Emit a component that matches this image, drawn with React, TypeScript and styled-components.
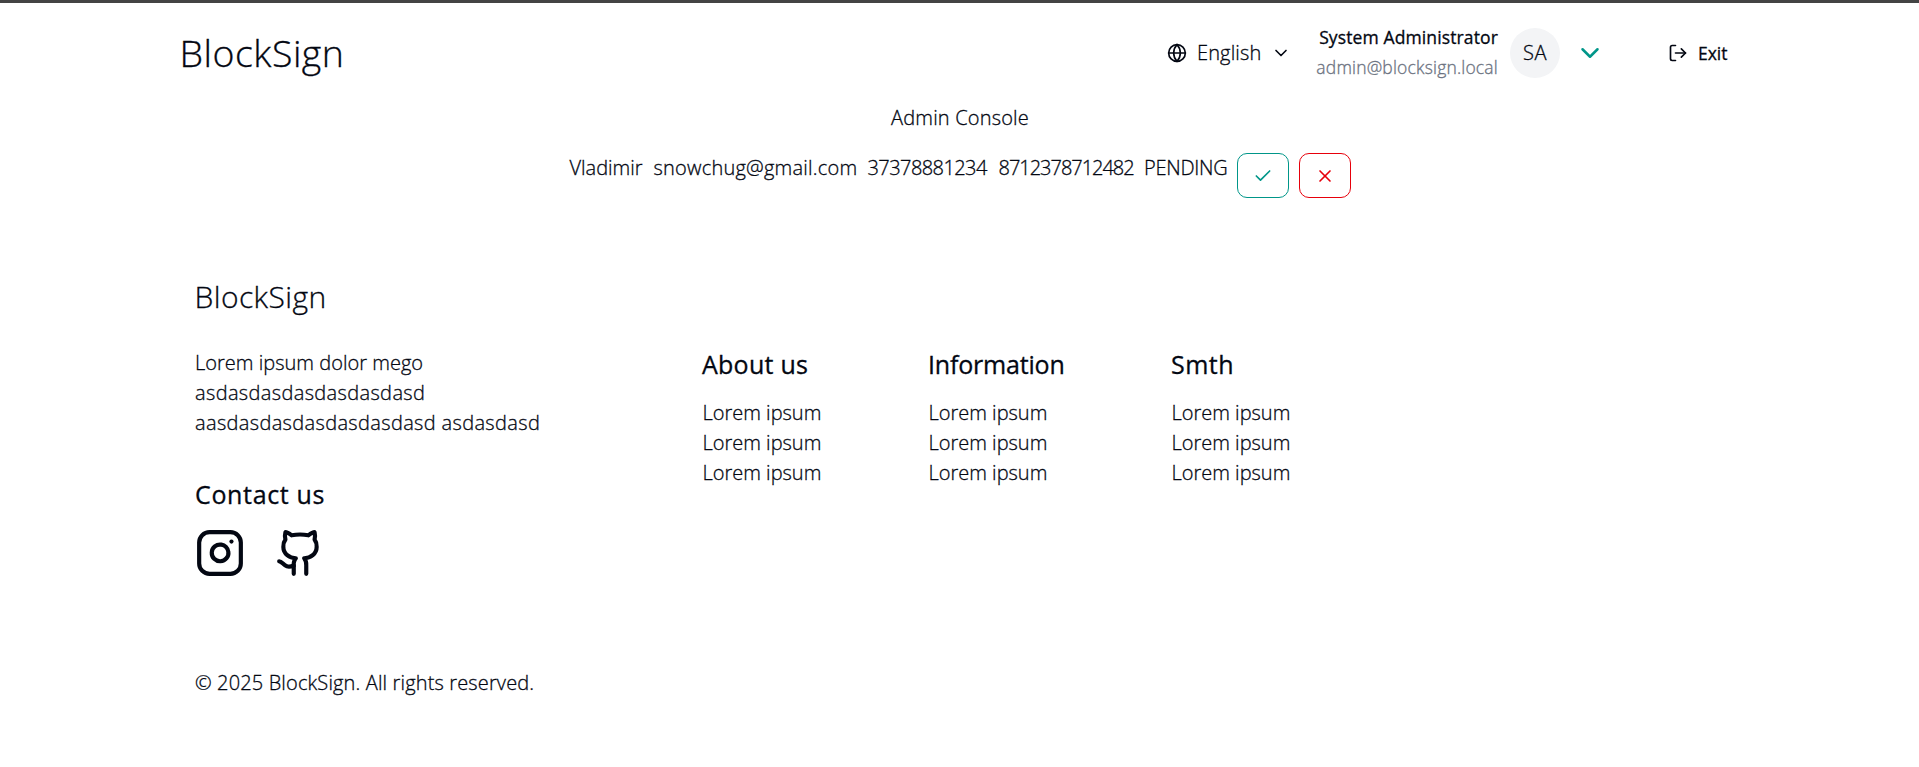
import React from "react";
import styled, { createGlobalStyle } from "styled-components";
import { Check, ChevronDown, Github, Globe, Instagram, LogOut, X } from "lucide-react";

const ink = "#030712";
const teal = "#009689";
const red = "#e7000b";

const GlobalStyle = createGlobalStyle`
  *, *::before, *::after { box-sizing: border-box; }
  body { margin: 0; background: #fff; }
  svg { display: block; flex: none; }
`;

const Page = styled.div`
  min-height: 767px;
  border-top: 3px solid #444;
  color: ${ink};
  font: 300 20px/30px "Open Sans", "Noto Sans", sans-serif;
  -webkit-text-stroke-width: 0.3px;
  white-space: nowrap;
`;

const Header = styled.header`
  width: 1560px;
  height: 100px;
  margin: 0 auto;
  display: flex;
  align-items: center;
  justify-content: space-between;
`;

const Logo = styled.div<{ $large?: boolean }>`
  font-size: ${(p) => (p.$large ? "37.5px" : "30px")};
  line-height: ${(p) => (p.$large ? "45px" : "40px")};
  letter-spacing: ${(p) => (p.$large ? "0.5px" : "0.4px")};
  padding-bottom: ${(p) => (p.$large ? "2px" : "0")};
`;

const HeaderActions = styled.div`
  display: flex;
  align-items: center;
`;

const LanguageButton = styled.button`
  display: flex;
  align-items: center;
  gap: 10px;
  width: 124px;
  margin-right: 25px;
  padding: 0;
  border: 0;
  background: none;
  color: inherit;
  font: inherit;
  letter-spacing: 0.15px;
`;

const LanguageName = styled.span`
  width: 64px;
  text-align: left;
`;

const Account = styled.div`
  display: flex;
  align-items: center;
`;

const Identity = styled.div`
  width: 184px;
  margin-top: -2px;
  font-size: 17.5px;
  text-align: right;
  padding-right: 2px;
`;

const UserName = styled.div`
  font-weight: 500;
  letter-spacing: 0.12px;
`;

const UserEmail = styled.div`
  color: #6b7280;
  letter-spacing: 0.18px;
`;

const Avatar = styled.div`
  width: 50px;
  height: 50px;
  margin: 0 15px 0 10px;
  border-radius: 50%;
  background: #f3f4f6;
  display: flex;
  align-items: center;
  justify-content: center;
  letter-spacing: 0.6px;
`;

const ExitButton = styled.button`
  display: flex;
  align-items: center;
  gap: 10px;
  margin-left: 63px;
  padding: 0 12px 0 0;
  border: 0;
  background: none;
  color: inherit;
  font: 400 17.5px/30px "Open Sans", "Noto Sans", sans-serif;
`;

const ExitLabel = styled.span`
  margin-top: -1px;
`;

const Main = styled.main`
  display: flex;
  flex-direction: column;
  align-items: center;
  gap: 20px;
`;

const Title = styled.div`
  padding-left: 1px;
  letter-spacing: 0.18px;
`;

const RequestRow = styled.div`
  display: flex;
  align-items: flex-start;
  gap: 10px;
`;

const Cell = styled.span<{ $width: number; $spacing?: number }>`
  width: ${(p) => p.$width}px;
  padding-left: 1px;
  letter-spacing: ${(p) => p.$spacing ?? 0}px;
`;

const DecisionButton = styled.button<{ $color: string }>`
  width: 52px;
  height: 45px;
  padding: 0;
  display: flex;
  align-items: center;
  justify-content: center;
  border: 1px solid ${(p) => p.$color};
  border-radius: 10px;
  background: #fff;
  color: ${(p) => p.$color};
`;

const Footer = styled.footer`
  width: 1530px;
  margin: 79px auto 0;
`;

const FooterGrid = styled.div`
  display: grid;
  grid-template-columns: 507px 226px 243px auto;
  margin-top: 31px;
`;

const Blurb = styled.div<{ $spacing: number }>`
  padding-left: 0.5px;
  letter-spacing: ${(p) => p.$spacing}px;
`;

const Heading = styled.h3<{ $spacing: number }>`
  margin: -1px 0 16px;
  padding-left: 0.5px;
  font-size: 25px;
  font-weight: 500;
  line-height: 35px;
  letter-spacing: ${(p) => p.$spacing}px;
`;

const Contact = styled.div`
  padding-top: 40px;
`;

const Socials = styled.div`
  display: flex;
  gap: 30px;
`;

const FooterLink = styled.div`
  padding-left: 1px;
`;

const Copyright = styled.div`
  margin-top: 90px;
  padding-left: 0.5px;
  letter-spacing: 0.14px;
`;

const columns = [
  { title: "About us", spacing: 0.26 },
  { title: "Information", spacing: -0.18 },
  { title: "Smth", spacing: 0.5 },
];

export default function App() {
  return (
    <Page>
      <GlobalStyle />
      <Header>
        <Logo $large>BlockSign</Logo>
        <HeaderActions>
          <LanguageButton>
            <Globe size={20} />
            <LanguageName>English</LanguageName>
            <ChevronDown size={20} />
          </LanguageButton>
          <Account>
            <Identity>
              <UserName>System Administrator</UserName>
              <UserEmail>admin@blocksign.local</UserEmail>
            </Identity>
            <Avatar>SA</Avatar>
            <ChevronDown size={30} color={teal} />
          </Account>
          <ExitButton>
            <LogOut size={20} />
            <ExitLabel>Exit</ExitLabel>
          </ExitButton>
        </HeaderActions>
      </Header>
      <Main>
        <Title>Admin Console</Title>
        <RequestRow>
          <Cell $width={74} $spacing={0}>Vladimir</Cell>
          <Cell $width={204} $spacing={0.22}>snowchug@gmail.com</Cell>
          <Cell $width={121} $spacing={-0.57}>37378881234</Cell>
          <Cell $width={135.5} $spacing={-1.02}>8712378712482</Cell>
          <Cell $width={83.5} $spacing={-0.25}>PENDING</Cell>
          <DecisionButton $color={teal} aria-label="Approve">
            <Check size={20} />
          </DecisionButton>
          <DecisionButton $color={red} aria-label="Reject">
            <X size={20} />
          </DecisionButton>
        </RequestRow>
      </Main>
      <Footer>
        <Logo>BlockSign</Logo>
        <FooterGrid>
          <div>
            <Blurb $spacing={0.02}>Lorem ipsum dolor mego</Blurb>
            <Blurb $spacing={0.36}>asdasdasdasdasdasdasd</Blurb>
            <Blurb $spacing={0.35}>aasdasdasdasdasdasdasd asdasdasd</Blurb>
            <Contact>
              <Heading $spacing={0.65}>Contact us</Heading>
              <Socials>
                <Instagram size={50} />
                <Github size={50} />
              </Socials>
            </Contact>
          </div>
          {columns.map((column) => (
            <div key={column.title}>
              <Heading $spacing={column.spacing}>{column.title}</Heading>
              <FooterLink>Lorem ipsum</FooterLink>
              <FooterLink>Lorem ipsum</FooterLink>
              <FooterLink>Lorem ipsum</FooterLink>
            </div>
          ))}
        </FooterGrid>
        <Copyright>© 2025 BlockSign. All rights reserved.</Copyright>
      </Footer>
    </Page>
  );
}
